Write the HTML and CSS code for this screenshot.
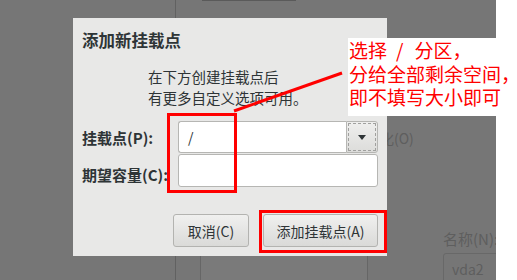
FILE: index.html
```html
<!DOCTYPE html>
<html lang="zh-CN">
<head>
  <meta charset="UTF-8" />
  <title>添加新挂载点</title>
  <link rel="stylesheet" href="styles.css">
</head>
<body>
  <!-- Installer window behind the modal -->
  <div class="desktop">
    <div class="sidebar"></div>
    <div class="workspace">
      <div class="ws-top"><div class="tab-edge"></div></div>
      <div class="ws-col gutter"></div>
      <div class="ws-col middle"></div>
      <div class="ws-col details">
        <div class="bg-label peek">化(O)</div>
        <div class="bg-label name">名称(N):</div>
        <div class="bg-entry">vda2</div>
      </div>
    </div>
    <div class="edge"></div>
  </div>

  <!-- Add mount point dialog -->
  <div class="dialog" role="dialog" aria-label="添加新挂载点">
    <div class="dialog-title">添加新挂载点</div>
    <div class="dialog-hint">在下方创建挂载点后<br>有更多自定义选项可用。</div>
    <div class="form">
      <label class="form-label first">挂载点(P):</label>
      <div class="combo">
        <div class="combo-entry">/</div>
        <div class="combo-button"><span class="focus-ring"><span class="arrow"></span></span></div>
      </div>
      <label class="form-label second">期望容量(C):</label>
      <div class="entry"></div>
    </div>
    <div class="actions">
      <button class="btn cancel">取消(C)</button>
      <button class="btn add">添加挂载点(A)</button>
    </div>
  </div>

  <!-- Annotation -->
  <div class="note">
    <div>选择<span class="slash">/</span>分区，</div>
    <div>分给全部剩余空间，</div>
    <div>即不填写大小即可</div>
  </div>
  <svg class="pointer" width="517" height="280" viewBox="0 0 517 280">
    <line x1="234" y1="111" x2="342" y2="73" stroke="#ff0000" stroke-width="3" />
  </svg>
  <div class="mark mark-entry"></div>
  <div class="mark mark-button"></div>
</body>
</html>
```

FILE: styles.css
```css
* {
  margin: 0; padding: 0; box-sizing: border-box;
}
html, body {
  width: 517px; height: 280px;
  overflow: hidden;
  background: #ffffff;
  font-family: "Noto Sans CJK SC", "Noto Sans", sans-serif;
}
body {
  position: relative;
}

/* Background window */
.desktop {
  display: flex;
  height: 280px;
  background: #767676;
}
.sidebar {
  width: 176px;
  border-right: 1px solid #616161;
}
.workspace {
  width: 320px;
  display: grid;
  grid-template-columns: 24px 167px 1fr;
  grid-template-rows: 100px 1fr;
  overflow: hidden;
}
.ws-top {
  grid-column: 1 / -1;
}
.tab-edge {
  margin-left: 26px;
  width: 94px;
  height: 1px;
  background: #5a5a5a;
}
.ws-col.middle {
  border-left: 1px solid #666666;
  background: #7a7a7a;
}
.ws-col.details {
  border-left: 1px solid #666666;
  display: flex;
  flex-direction: column;
  padding-top: 28px;
  white-space: nowrap;
}
.bg-label {
  color: #5e5e5e;
  font-size: 14px;
  line-height: 20px;
}
.bg-label.peek {
  margin-left: 12px;
}
.bg-label.name {
  margin-top: 81px;
  margin-left: 75px;
  font-size: 15px;
}
.bg-entry {
  margin-top: 4px;
  margin-left: 75px;
  width: 80px;
  height: 32px;
  border: 1px solid #686868;
  border-radius: 3px;
  color: #5e5e5e;
  font-size: 14px;
  line-height: 30px;
  padding-left: 8px;
}
.edge {
  flex: 1;
  background: #ffffff;
}

/* Dialog */
.dialog {
  position: absolute;
  left: 73px;
  top: 18px;
  width: 314px;
  height: 238px;
  background: #e8e8e7;
  color: #2e3436;
  padding: 11px 9px 9px 9px;
  display: flex;
  flex-direction: column;
}
.dialog-title {
  font-size: 16.5px;
  font-weight: bold;
  line-height: 22px;
}
.dialog-hint {
  margin-top: 15px;
  margin-left: 66px;
  font-size: 14.5px;
  line-height: 21px;
}
.form {
  margin-top: 13px;
  display: grid;
  grid-template-columns: 96px 200px;
  grid-template-rows: 32px 33px;
  row-gap: 1px;
}
.form-label {
  font-size: 15px;
  font-weight: bold;
  line-height: 22px;
  white-space: nowrap;
}
.form-label.first { padding-top: 6px; }
.form-label.second { padding-top: 10px; }

.combo {
  display: flex;
}
.combo-entry {
  width: 168px;
  background: #ffffff;
  border: 1px solid #b6b6b3;
  border-right: none;
  border-radius: 3px 0 0 3px;
  font-size: 14px;
  line-height: 30px;
  padding-left: 9px;
}
.combo-button {
  flex: 1;
  border: 1px solid #b6b6b3;
  border-radius: 0 3px 3px 0;
  background: linear-gradient(#efefee, #dcdcda);
  padding: 1px;
  display: flex;
}
.focus-ring {
  flex: 1;
  border: 1px dashed #a0a09e;
  display: flex;
  align-items: center;
  justify-content: center;
}
.arrow {
  width: 0; height: 0;
  border-left: 4.5px solid transparent;
  border-right: 4.5px solid transparent;
  border-top: 5px solid #2e3436;
}
.entry {
  background: #ffffff;
  border: 1px solid #b6b6b3;
  border-radius: 3px;
}

/* Buttons */
.actions {
  margin-top: auto;
  display: flex;
  justify-content: flex-end;
  gap: 14px;
}
.btn {
  height: 33px;
  border: 1px solid #b3b3b0;
  border-radius: 3px;
  background: linear-gradient(#f0f0ef, #dadad8);
  color: #2e3436;
  font-family: inherit;
  font-size: 14px;
}
.btn.cancel { width: 76px; }
.btn.add { width: 115px; }

/* Red annotation */
.note {
  position: absolute;
  left: 348px;
  top: 38px;
  width: 148px;
  height: 78px;
  background: #ffffff;
  padding-left: 1px;
  color: #ff0000;
  font-size: 19px;
  line-height: 23.5px;
  white-space: nowrap;
}
.slash {
  margin: 0 11px 0 9px;
}
.pointer {
  position: absolute;
  left: 0; top: 0;
}
.mark {
  position: absolute;
  border: 3px solid #ff0000;
}
.mark-entry {
  left: 167px; top: 113px;
  width: 70px; height: 80px;
}
.mark-button {
  left: 259px; top: 210px;
  width: 128px; height: 43px;
}
```
